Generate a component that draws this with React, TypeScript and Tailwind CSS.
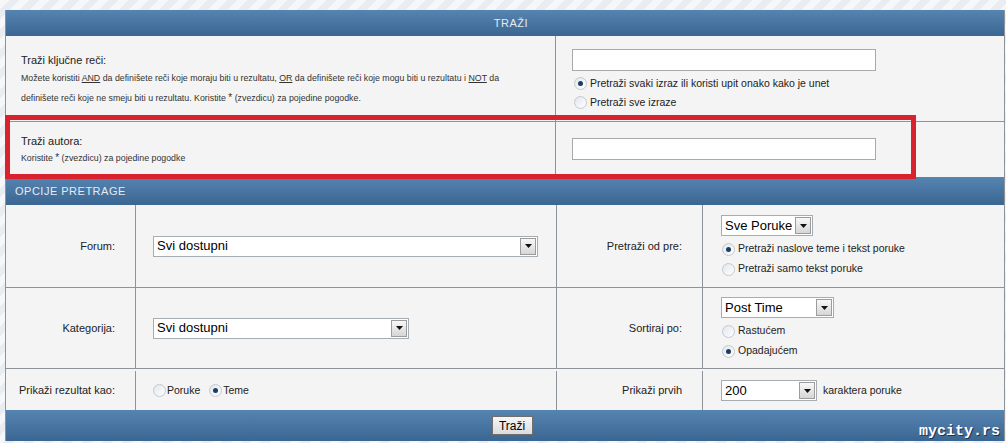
import React from "react";

const Radio = ({ checked }: { checked?: boolean }) => (
  <span className="inline-flex h-[13px] w-[13px] shrink-0 items-center justify-center rounded-full border border-[#c3c9d2] bg-gradient-to-br from-[#e2e6ec] to-white">
    {checked && <span className="h-[5px] w-[5px] rounded-full bg-[#1e3d66]" />}
  </span>
);

const Select = ({ value, className }: { value: string; className: string }) => (
  <div
    className={`flex h-[21px] items-center justify-between border border-[#a5acb2] bg-white pl-[3px] pr-px text-[13px] text-black ${className}`}
  >
    <span>{value}</span>
    <span className="flex h-[17px] w-[16px] items-center justify-center border border-[#9c9c9c] bg-gradient-to-b from-[#f8f8f8] to-[#d6d6d6]">
      <svg width="7" height="4" viewBox="0 0 7 4">
        <path d="M0 0h7L3.5 4z" fill="#111" />
      </svg>
    </span>
  </div>
);

const TextInput = () => (
  <div className="h-[22px] w-[304px] border border-[#a9a9a9] bg-white" />
);

const Bar = ({ children, className }: { children?: React.ReactNode; className: string }) => (
  <div
    className={`flex items-center bg-gradient-to-b from-[#5684b1] to-[#3b6692] text-[11px] tracking-[0.5px] text-[#e3ebf3] ${className}`}
  >
    {children}
  </div>
);

const Label = ({ children }: { children: React.ReactNode }) => (
  <div className="flex items-center justify-end border-r border-[#8d9399] pr-[20px] text-[11px]">
    {children}
  </div>
);

export default function App() {
  return (
    <div className="relative h-[443px] w-[1006px] overflow-hidden bg-[repeating-linear-gradient(135deg,#f6f7f9_0px,#f6f7f9_7px,#e9ecf0_7px,#e9ecf0_14px)] pt-[10px] font-['Liberation_Sans',Arial,sans-serif] text-[#222]">
      <div className="ml-[5px] w-[1000px] border-x border-[#8d9399] bg-[#f4f4f4]">
        <Bar className="h-[26px] justify-center pl-[12px]">TRAŽI</Bar>

        {/* kljucne reci */}
        <div className="grid h-[86px] grid-cols-[550px_1fr] border-b border-[#8d9399]">
          <div className="border-r border-[#8d9399] pl-[15px] pt-[16px]">
            <div className="text-[11px] leading-[16px]">Traži ključne reči:</div>
            <div className="text-[8.8px] leading-[20px] text-[#333]">
              Možete koristiti <u>AND</u> da definišete reči koje moraju biti u rezultatu,{" "}
              <u>OR</u> da definišete reči koje mogu biti u rezultatu i <u>NOT</u> da
              <br />
              definišete reči koje ne smeju biti u rezultatu. Koristite{" "}
              <span className="text-[10px]">*</span> (zvezdicu) za pojedine pogodke.
            </div>
          </div>
          <div className="pl-[16px] pt-[13px] text-[10.5px]">
            <TextInput />
            <div className="mt-[3px] flex h-[19px] items-center gap-[3px] pl-[2px]">
              <Radio checked />
              <span>Pretraži svaki izraz ili koristi upit onako kako je unet</span>
            </div>
            <div className="flex h-[19px] items-center gap-[3px] pl-[2px]">
              <Radio />
              <span>Pretraži sve izraze</span>
            </div>
          </div>
        </div>

        {/* autor */}
        <div className="grid h-[55px] grid-cols-[550px_1fr]">
          <div className="border-r border-[#8d9399] pl-[15px] pt-[11px]">
            <div className="text-[11px] leading-[16px]">Traži autora:</div>
            <div className="text-[8.8px] leading-[18px] text-[#333]">
              Koristite <span className="text-[10px]">*</span> (zvezdicu) za pojedine pogodke
            </div>
          </div>
          <div className="pl-[16px] pt-[16px]">
            <TextInput />
          </div>
        </div>

        <Bar className="h-[28px] pl-[9px]">OPCIJE PRETRAGE</Bar>

        {/* forum */}
        <div className="grid h-[83px] grid-cols-[130px_421px_146px_1fr] border-b border-[#8d9399]">
          <Label>Forum:</Label>
          <div className="flex items-center border-r border-[#8d9399] pl-[17px]">
            <Select value="Svi dostupni" className="w-[385px]" />
          </div>
          <Label>Pretraži od pre:</Label>
          <div className="flex flex-col pl-[18px] pt-[10px] text-[10.5px]">
            <Select value="Sve Poruke" className="w-[92px]" />
            <div className="mt-[3px] flex h-[20px] items-center gap-[3px] pl-px">
              <Radio checked />
              <span>Pretraži naslove teme i tekst poruke</span>
            </div>
            <div className="flex h-[20px] items-center gap-[3px] pl-px">
              <Radio />
              <span>Pretraži samo tekst poruke</span>
            </div>
          </div>
        </div>

        {/* kategorija */}
        <div className="grid h-[81px] grid-cols-[130px_421px_146px_1fr] border-b border-[#8d9399]">
          <Label>Kategorija:</Label>
          <div className="flex items-center border-r border-[#8d9399] pl-[17px]">
            <Select value="Svi dostupni" className="w-[256px]" />
          </div>
          <Label>Sortiraj po:</Label>
          <div className="flex flex-col pl-[18px] pt-[9px] text-[10.5px]">
            <Select value="Post Time" className="w-[113px]" />
            <div className="mt-[3px] flex h-[20px] items-center gap-[3px] pl-px">
              <Radio />
              <span>Rastućem</span>
            </div>
            <div className="flex h-[20px] items-center gap-[3px] pl-px">
              <Radio checked />
              <span>Opadajućem</span>
            </div>
          </div>
        </div>

        {/* prikazi */}
        <div className="grid h-[41px] grid-cols-[130px_421px_146px_1fr] pt-[2px]">
          <Label>Prikaži rezultat kao:</Label>
          <div className="flex items-center gap-[1px] border-r border-[#8d9399] pl-[17px] text-[10.5px]">
            <Radio />
            <span className="mr-[8px]">Poruke</span>
            <Radio checked />
            <span>Teme</span>
          </div>
          <Label>Prikaži prvih</Label>
          <div className="flex items-center gap-[6px] pl-[18px] text-[10.5px]">
            <Select value="200" className="w-[96px]" />
            <span>karaktera poruke</span>
          </div>
        </div>

        <Bar className="h-[31px] justify-center pl-[14px]">
          <button className="h-[19px] w-[41px] border border-[#6f6f6f] bg-gradient-to-b from-[#f6f6f6] to-[#dcdcdc] text-[12px] tracking-normal text-black">
            Traži
          </button>
        </Bar>
      </div>

      {/* oznaka */}
      <div className="absolute left-[5px] top-[115px] h-[64px] w-[911px] border-[5px] border-[#d8232e]" />

      <div className="absolute right-[6px] top-[424px] font-['Liberation_Mono',monospace] text-[15px] font-bold leading-[16px] text-white [text-shadow:1px_1px_0_#1b3350]">
        mycity.rs
      </div>
    </div>
  );
}
